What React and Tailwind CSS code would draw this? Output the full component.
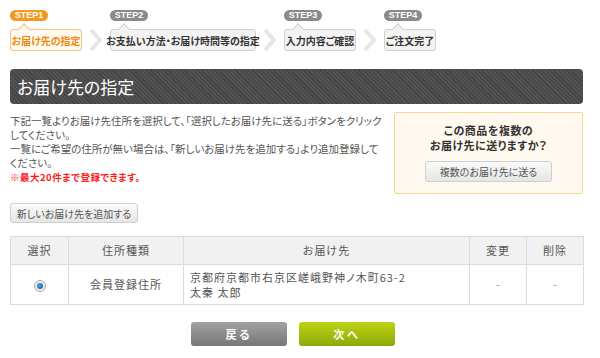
const jp = "font-['Noto_Sans_CJK_JP',sans-serif] [font-feature-settings:'palt']";

const steps = [
  { label: 'STEP1', text: 'お届け先の指定', width: 'w-[72px]', active: true },
  { label: 'STEP2', text: 'お支払い方法・お届け時間等の指定', width: 'w-[146px]' },
  { label: 'STEP3', text: '入力内容ご確認', width: 'w-[72px]' },
  { label: 'STEP4', text: 'ご注文完了', width: 'w-[52px]' },
];

function Chevron() {
  return (
    <div className="flex w-[28px] shrink-0 items-end justify-center">
      <svg width="14" height="22" viewBox="0 0 14 22">
        <polyline points="2,1 11,11 2,21" fill="none" stroke="#e6e6e6" strokeWidth="4" />
      </svg>
    </div>
  );
}

function Step({ step }) {
  const box = step.active
    ? 'border-[#f6c27e] bg-[#fffaf0] text-[#ee8a10]'
    : 'border-[#cfcfcf] bg-[#f3f3f3] text-[#333]';
  return (
    <div className="flex shrink-0 flex-col">
      <div
        className={`flex h-[11px] w-[38px] items-center justify-center rounded-full text-[9px] font-bold leading-none text-white font-['Liberation_Sans',sans-serif] ${
          step.active ? 'bg-[#f39a1e]' : 'bg-[#8a8a8a]'
        }`}
      >
        {step.label}
      </div>
      <div
        className={`relative mt-[8px] flex h-[22px] items-center justify-center rounded-[3px] border text-[10px] font-bold whitespace-nowrap ${step.width} ${box}`}
      >
        <span
          className={`absolute -top-[5px] left-[9px] h-[8px] w-[8px] rotate-45 border-l border-t ${box}`}
        />
        <span className="relative">{step.text}</span>
      </div>
    </div>
  );
}

export default function App() {
  return (
    <div className={`h-[358px] w-[600px] overflow-hidden bg-white pl-[10px] text-[#555] ${jp}`}>
      <div className="w-[573px]">
        <div className="flex pt-[10px]">
          {steps.map((s, i) => (
            <div key={s.label} className="flex">
              {i > 0 && <Chevron />}
              <Step step={s} />
            </div>
          ))}
        </div>

        <div className="mt-[18px] flex h-[35px] items-center rounded-[4px] bg-[repeating-linear-gradient(45deg,#424242_0px,#424242_1px,#525252_1px,#525252_3px)] pl-[7px] text-[17px] text-white">
          お届け先の指定
        </div>

        <div className="mt-[8px] flex h-[82px] justify-between">
          <div className="w-[380px] whitespace-nowrap pt-[2px] text-[10.5px] leading-[14px] text-[#555]">
            下記一覧よりお届け先住所を選択して、「選択したお届け先に送る」ボタンをクリック
            <br />
            してください。
            <br />
            一覧にご希望の住所が無い場合は、「新しいお届け先を追加する」より追加登録して
            <br />
            ください。
            <br />
            <span className="text-[9.5px] font-bold tracking-[0.5px] text-[#ff1a1a]">※最大20件まで登録できます。</span>
          </div>
          <div className="flex h-[82px] w-[189px] shrink-0 flex-col items-center rounded-[2px] border border-[#f7d58f] bg-[#fff9ef] pt-[10px]">
            <p className="text-center text-[11px] font-bold leading-[15px] tracking-[0.5px] text-[#333]">
              この商品を複数の
              <br />
              お届け先に送りますか？
            </p>
            <button className="mt-[8px] h-[21px] w-[127px] rounded-[3px] border border-[#cfcfcf] bg-gradient-to-b from-[#fafafa] to-[#e6e6e6] text-[10px] text-[#555]">
              複数のお届け先に送る
            </button>
          </div>
        </div>

        <button className="mt-[9px] block h-[20px] w-[128px] rounded-[3px] border border-[#cfcfcf] bg-gradient-to-b from-[#fafafa] to-[#e6e6e6] text-[10px] text-[#555]">
          新しいお届け先を追加する
        </button>

        <table className="mt-[13px] w-[573px] table-fixed border-collapse text-[11px] text-[#555]">
          <colgroup>
            <col className="w-[58px]" />
            <col className="w-[115px]" />
            <col className="w-[286px]" />
            <col className="w-[57px]" />
            <col className="w-[57px]" />
          </colgroup>
          <thead>
            <tr className="h-[28px] bg-[#f1f1f1]">
              <th className="border border-[#dcdcdc] font-normal tracking-[1px]">選択</th>
              <th className="border border-[#dcdcdc] font-normal tracking-[1px]">住所種類</th>
              <th className="border border-[#dcdcdc] font-normal tracking-[1px]">お届け先</th>
              <th className="border border-[#dcdcdc] font-normal tracking-[1px]">変更</th>
              <th className="border border-[#dcdcdc] font-normal tracking-[1px]">削除</th>
            </tr>
          </thead>
          <tbody>
            <tr className="h-[40px]">
              <td className="border border-[#dcdcdc]">
                <div className="flex justify-center pt-[2px]">
                  <span className="flex h-[12px] w-[12px] items-center justify-center rounded-full border border-[#aaa] bg-[#eee]">
                    <span className="h-[6px] w-[6px] rounded-full bg-[radial-gradient(circle_at_40%_40%,#4fa3e8,#0d4f9a)]" />
                  </span>
                </div>
              </td>
              <td className="border border-[#dcdcdc] text-center tracking-[1px]">会員登録住所</td>
              <td className="border border-[#dcdcdc] px-[6px] tracking-[1px]">
                <div className="leading-[15px]">京都府京都市右京区嵯峨野神ノ木町63-2</div>
                <div className="leading-[15px]">太秦 太郎</div>
              </td>
              <td className="border border-[#dcdcdc] text-center text-[#999]">-</td>
              <td className="border border-[#dcdcdc] text-center text-[#999]">-</td>
            </tr>
          </tbody>
        </table>

        <div className="mt-[17px] flex gap-[12px] pl-[181px]">
          <button className="h-[24px] w-[96px] rounded-[3px] bg-gradient-to-b from-[#a2a2a2] to-[#777] text-[11px] font-bold tracking-[3px] text-white">
            戻る
          </button>
          <button className="h-[24px] w-[96px] rounded-[3px] bg-gradient-to-b from-[#bfd313] to-[#8eaa08] text-[11px] font-bold tracking-[3px] text-white">
            次へ
          </button>
        </div>
      </div>
    </div>
  );
}
